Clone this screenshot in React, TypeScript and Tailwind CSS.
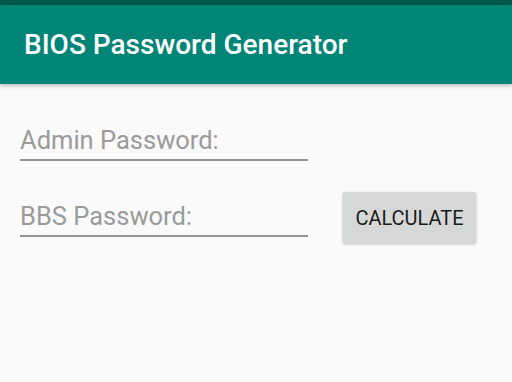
import React from 'react';

const fieldText = 'text-[25.5px] leading-[30px] text-[#9b9b9b]';

function Field({ label }: { label: string }) {
  return (
    <div className="w-[288px]">
      <div className={fieldText}>{label}</div>
      <div className="mt-[4px] h-[2px] bg-[#939393]" />
    </div>
  );
}

export default function App() {
  return (
    <div className="w-[512px] h-[382px] bg-[#fafafa] overflow-hidden" style={{ fontFamily: 'Roboto, "Liberation Sans", sans-serif' }}>
      <div className="h-[5px] bg-[#00574b]" />
      <div className="h-[79px] bg-[#008577] flex items-center pl-[24px] shadow-[0_2px_4px_rgba(0,0,0,0.25)] relative">
        <h1 className="text-white text-[28px] font-medium">BIOS Password Generator</h1>
      </div>

      <div className="pl-[20px] pt-[41px]">
        <Field label="Admin Password:" />
        <div className="flex items-start mt-[31px]">
          <div className="mt-[9px]">
            <Field label="BBS Password:" />
          </div>
          <button className="ml-[35px] w-[133px] h-[51px] bg-[#d6d7d7] rounded-[2px] shadow-[0_1px_3px_rgba(0,0,0,0.25)] text-[#1b1b1b] text-[20px] flex items-center justify-center">
            CALCULATE
          </button>
        </div>
      </div>
    </div>
  );
}
